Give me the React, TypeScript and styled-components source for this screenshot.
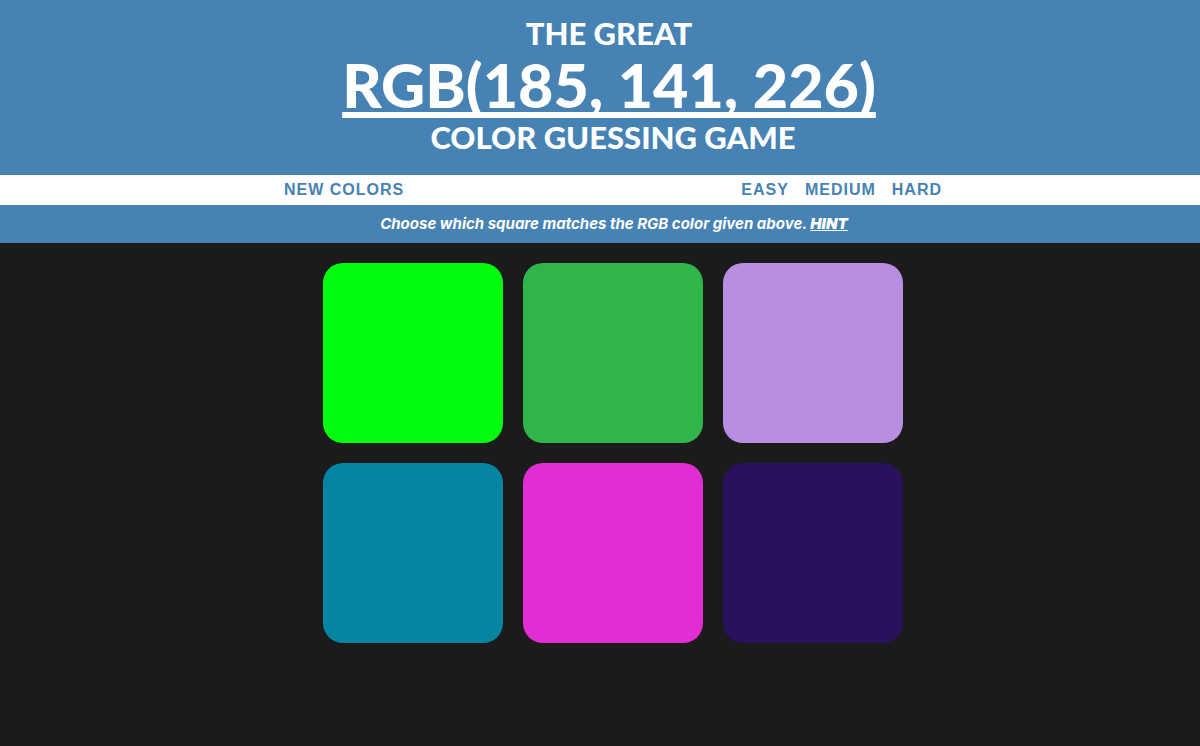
import React from "react";
import styled, { createGlobalStyle } from "styled-components";

const blue = "#4682b4";

const GlobalStyle = createGlobalStyle`
  * { box-sizing: border-box; }
  body {
    margin: 0;
    background: #1b1b1b;
    color: #fff;
  }
  button {
    border: 0;
    background: none;
    cursor: pointer;
  }
`;

const Header = styled.header`
  background: ${blue};
  padding: 14px 0 19px 26px;
`;

const Title = styled.h1`
  margin: 0;
  font: 900 31px/38px Lato, sans-serif;
  text-align: center;
  text-transform: uppercase;
`;

const TitleLine = styled.span<{ $trail?: boolean }>`
  display: block;
  padding-right: ${(p) => (p.$trail ? "8px" : "0")};
`;

const Target = styled(TitleLine)`
  font-size: 61px;
  line-height: 66px;
`;

const TargetValue = styled.span`
  text-decoration: underline;
  text-decoration-thickness: 6px;
  text-underline-offset: 4px;
  text-decoration-skip-ink: none;
`;

const NavBar = styled.nav`
  display: flex;
  justify-content: center;
  background: #fff;
  padding-left: 26px;
`;

const NavInner = styled.div`
  display: flex;
  justify-content: space-between;
  width: 100%;
  max-width: 674px;
`;

const Modes = styled.div`
  display: flex;
`;

const NavButton = styled.button`
  padding: 0 8px;
  color: ${blue};
  font: 700 16px/30px "Liberation Sans", Arial, sans-serif;
  letter-spacing: 1px;
  text-transform: uppercase;
`;

const Message = styled.p`
  margin: 0;
  padding: 0 0 0 28px;
  background: ${blue};
  font: italic 700 15px/38px Inter, sans-serif;
  text-align: center;
`;

const HintButton = styled.button`
  padding: 0;
  color: inherit;
  font: inherit;
  font-weight: 900;
  text-decoration: underline;
  text-underline-offset: 1px;
`;

const Board = styled.main`
  display: grid;
  grid-template-columns: repeat(3, 180px);
  justify-content: center;
  gap: 20px;
  padding: 20px 0 20px 26px;
`;

const Square = styled.button<{ $color: string }>`
  height: 180px;
  border-radius: 20px;
  background: ${(p) => p.$color};
`;

const colors = [
  "rgb(0, 253, 14)",
  "rgb(48, 181, 75)",
  "rgb(185, 141, 226)",
  "rgb(5, 133, 161)",
  "rgb(226, 44, 212)",
  "rgb(42, 17, 92)",
];

export default function App() {
  return (
    <>
      <GlobalStyle />
      <Header>
        <Title>
          <TitleLine $trail>The Great</TitleLine>
          <Target $trail>
            <TargetValue>{colors[2]}</TargetValue>
          </Target>
          <TitleLine>Color Guessing Game</TitleLine>
        </Title>
      </Header>
      <NavBar>
        <NavInner>
          <NavButton>New Colors</NavButton>
          <Modes>
            <NavButton>Easy</NavButton>
            <NavButton>Medium</NavButton>
            <NavButton>Hard</NavButton>
          </Modes>
        </NavInner>
      </NavBar>
      <Message>
        Choose which square matches the RGB color given above. <HintButton>HINT</HintButton>
      </Message>
      <Board>
        {colors.map((color, i) => (
          <Square key={color} $color={color} aria-label={`Square ${i + 1}`} />
        ))}
      </Board>
    </>
  );
}
